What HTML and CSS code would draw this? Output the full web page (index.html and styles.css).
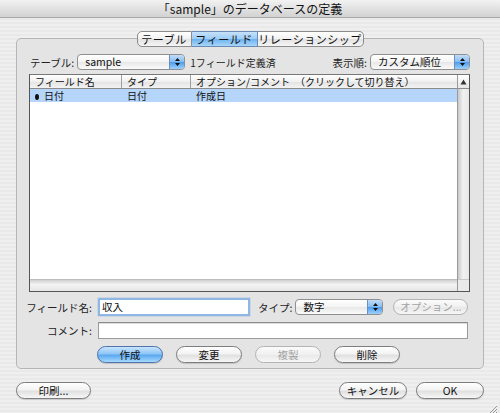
FILE: index.html
```html
<!DOCTYPE html>
<html lang="ja">
<head>
<meta charset="utf-8">
<link rel="stylesheet" href="styles.css">
</head>
<body>
<div class="window">
  <div class="titlebar">「sample」のデータベースの定義</div>
  <div class="content">
    <div class="tabs">
      <div class="tab first">テーブル</div>
      <div class="tab active">フィールド</div>
      <div class="tab last">リレーションシップ</div>
    </div>
    <div class="group">
      <div class="row1">
        <div class="left">
          <span class="label">テーブル:</span>
          <div class="popup w108"><span class="ptext">sample</span><span class="pcap"><svg width="7" height="10" viewBox="0 0 7 10"><path d="M3.5 1 L6 4 L1 4 Z M3.5 9 L6 6 L1 6 Z" fill="#111"/></svg></span></div>
          <span class="info">1フィールド定義済</span>
        </div>
        <div class="right">
          <span class="label">表示順:</span>
          <div class="popup w99"><span class="ptext">カスタム順位</span><span class="pcap"><svg width="7" height="10" viewBox="0 0 7 10"><path d="M3.5 1 L6 4 L1 4 Z M3.5 9 L6 6 L1 6 Z" fill="#111"/></svg></span></div>
        </div>
      </div>
      <div class="list">
        <div class="lmain">
          <div class="lheader">
            <div class="col c1">フィールド名</div>
            <div class="col c2">タイプ</div>
            <div class="col c3">オプション/コメント　（クリックして切り替え）</div>
          </div>
          <div class="lrow sel">
            <div class="col c1"><span class="dot"></span>日付</div>
            <div class="col c2">日付</div>
            <div class="col c3">作成日</div>
          </div>
          <div class="lbody"></div>
          <div class="lfoot"></div>
        </div>
        <div class="vscroll">
          <div class="vtop"><svg width="7" height="6" viewBox="0 0 7 6"><path d="M3.5 0.5 L6.5 5.5 L0.5 5.5 Z" fill="#333"/></svg></div>
          <div class="vtrack"></div>
          <div class="vbot"></div>
        </div>
      </div>
      <div class="frow">
        <span class="flabel">フィールド名:</span>
        <div class="input focus w152">収入</div>
        <span class="tlabel">タイプ:</span>
        <div class="popup w88"><span class="ptext">数字</span><span class="pcap"><svg width="7" height="10" viewBox="0 0 7 10"><path d="M3.5 1 L6 4 L1 4 Z M3.5 9 L6 6 L1 6 Z" fill="#111"/></svg></span></div>
        <div class="btn small disabled w75">オプション...</div>
      </div>
      <div class="crow">
        <span class="flabel">コメント:</span>
        <div class="input wide"></div>
      </div>
      <div class="brow">
        <div class="btn default">作成</div>
        <div class="btn">変更</div>
        <div class="btn disabled">複製</div>
        <div class="btn">削除</div>
      </div>
    </div>
    <div class="bottom">
      <div class="btn w75">印刷...</div>
      <div class="bright">
        <div class="btn w68">キャンセル</div>
        <div class="btn w68">OK</div>
      </div>
    </div>
  </div>
  <div class="grip"><svg width="10" height="10" viewBox="0 0 10 10"><path d="M9 2 L2 9 M9 5 L5 9 M9 8 L8 9" stroke="#999" stroke-width="1"/></svg></div>
</div>
</body>
</html>
```
FILE: styles.css
```css
* { box-sizing: border-box; }
html, body { margin: 0; padding: 0; }
body {
  width: 500px; height: 413px; overflow: hidden;
  font-family: "Noto Sans CJK JP", "Liberation Sans", sans-serif;
  font-size: 11px; color: #111;
}
.window {
  position: relative;
  width: 500px; height: 413px;
  background: repeating-linear-gradient(to bottom, #efefef 0, #efefef 2px, #e9e9e9 2px, #e9e9e9 4px);
}
.titlebar {
  height: 18px;
  background: linear-gradient(#f2f2f2, #d2d2d2);
  border-bottom: 1px solid #a8a8a8;
  text-align: center;
  font-size: 12px;
  line-height: 17px;
  color: #111;
  white-space: nowrap;
}
.content { padding: 0 16px; }
.tabs {
  display: flex; justify-content: center;
  margin-top: 13px;
  margin-bottom: -9px;
  position: relative; z-index: 1;
}
.tab {
  height: 16px; line-height: 14px;
  font-size: 11px;
  white-space: nowrap;
  text-align: center;
  background: linear-gradient(#ffffff, #f1f1f1 50%, #e2e2e2 52%, #f5f5f5);
  border: 1px solid #8c8c8c;
  border-left: none;
  letter-spacing: 0.5px;
}
.tab.first { width: 55px; border-left: 1px solid #8c8c8c; border-radius: 5px 0 0 5px; }
.tab.active {
  width: 66px;
  background: linear-gradient(#c6e1fb, #9ccbf5 50%, #6db2ef 52%, #a8d6fb);
  border-color: #6a8bb5;
}
.tab.last { width: 106px; border-radius: 0 5px 5px 0; }
.group {
  height: 331px;
  border: 1px solid #b6b6b6;
  border-radius: 5px;
  background: #e4e4e4;
  padding: 15px 13px 0 12px;
  display: flex; flex-direction: column;
}
.row1 { display: flex; justify-content: space-between; align-items: center; height: 16px; }
.left, .right { display: flex; align-items: center; }
.label { font-size: 10.5px; margin-right: 3px; color: #222; white-space: nowrap; }
.left .label { margin-left: 1px; }
.info { font-size: 10px; margin-left: 5px; color: #222; white-space: nowrap; }
.popup {
  height: 16px;
  display: flex;
  border: 1px solid #8f8f8f;
  border-radius: 4px;
  background: linear-gradient(#ffffff, #f4f4f4 50%, #e8e8e8 52%, #fafafa);
  overflow: hidden;
  flex: none;
}
.ptext { flex: 1; padding-left: 7px; font-size: 10.5px; line-height: 14px; white-space: nowrap; }
.pcap {
  width: 15px;
  display: flex; align-items: center; justify-content: center;
  background: linear-gradient(#c1dcf8, #86bcf1 50%, #4f9ced 52%, #9ed0fb);
  border-left: 1px solid #6d8fbc;
}
.list {
  margin-top: 4px;
  height: 218px;
  border: 1px solid #555;
  border-top-color: #777;
  display: flex;
  background: #fff;
}
.lmain { flex: 1; display: flex; flex-direction: column; }
.lheader {
  height: 14px; display: flex;
  background: linear-gradient(#ffffff, #f0f0f0 50%, #e3e3e3 52%, #f3f3f3);
  border-bottom: 1px solid #8c8c8c;
  font-size: 10px; line-height: 13px; color: #111;
  white-space: nowrap;
}
.lheader .col { border-right: 1px solid #a0a0a0; padding-left: 5px; }
.lheader .c3 { border-right: none; }
.col.c1 { width: 92px; }
.col.c2 { width: 69px; }
.col.c3 { flex: 1; }
.lrow { height: 13px; display: flex; font-size: 10px; line-height: 13px; }
.lrow .col { padding-left: 5px; }
.lrow.sel { background: #b5d5fb; }
.dot { display: inline-block; width: 4px; height: 6px; background: #111; border-radius: 50%; margin-right: 5px; vertical-align: 0; }
.lbody { flex: 1; }
.lfoot {
  height: 12px;
  background: linear-gradient(#cfcfcf, #f3f3f3 40%, #e6e6e6);
  border-top: 1px solid #bdbdbd;
}
.vscroll { width: 12px; display: flex; flex-direction: column; border-left: 1px solid #9a9a9a; }
.vtop {
  height: 14px; border-bottom: 1px solid #8c8c8c;
  background: linear-gradient(#fff, #e6e6e6);
  display: flex; align-items: center; justify-content: center;
}
.vtrack { flex: 1; background: linear-gradient(to right, #c9c9c9, #f1f1f1 45%, #e8e8e8); }
.vbot { height: 12px; background: #eaeaea; border-top: 1px solid #c8c8c8; }
.frow { display: flex; align-items: center; height: 18px; margin-top: 6px; }
.flabel { margin-left: -8px; width: 71px; text-align: right; font-size: 10.5px; color: #222; margin-right: 6px; flex: none; white-space: nowrap; }
.input {
  height: 18px; background: #fff;
  border: 1px solid #9b9b9b; border-top-color: #8a8a8a;
  font-size: 10.5px; line-height: 16px; padding-left: 3px;
  box-shadow: inset 0 1px 1px rgba(0,0,0,0.15);
  flex: none;
}
.input.focus { border: 2px solid #8fb7e5; box-shadow: 0 0 1px #5b95d9; line-height: 14px; padding-left: 2px; }
.tlabel { font-size: 10.5px; margin-left: 8px; margin-right: 3px; color: #222; white-space: nowrap; }
.frow .btn { margin-left: 10px; }
.crow { display: flex; align-items: center; height: 17px; margin-top: 6px; }
.input.wide { width: 370px; height: 17px; }
.brow { display: flex; justify-content: center; gap: 13px; margin-top: 7px; padding-right: 2px; }
.btn {
  width: 66px; height: 17px;
  border: 1px solid #7d7d7d;
  border-radius: 9px;
  background: linear-gradient(#ffffff, #f3f3f3 45%, #e0e0e0 55%, #f7f7f7);
  text-align: center;
  font-size: 10.5px; line-height: 15px;
  color: #111;
  box-shadow: 0 1px 1px rgba(0,0,0,0.15);
  white-space: nowrap;
  flex: none;
}
.btn.small { height: 16px; line-height: 14px; }
.btn.default {
  background: linear-gradient(#c9e4fd, #8ec6f6 45%, #5aa8f0 55%, #a7dafd);
  border-color: #4f73ad;
}
.btn.disabled { color: #a3a3a3; border-color: #b4b4b4; box-shadow: none; background: linear-gradient(#fbfbfb, #f0f0f0 50%, #e8e8e8 52%, #f7f7f7); }
.w108 { width: 108px; }
.w99 { width: 100px; }
.w88 { width: 88px; }
.w152 { width: 152px; }
.btn.w75 { width: 75px; }
.btn.w68 { width: 68px; }
.bottom { display: flex; justify-content: space-between; margin-top: 13px; }
.bright { display: flex; gap: 9px; }
.grip { position: absolute; right: 2px; bottom: 2px; width: 10px; height: 10px; }
```
